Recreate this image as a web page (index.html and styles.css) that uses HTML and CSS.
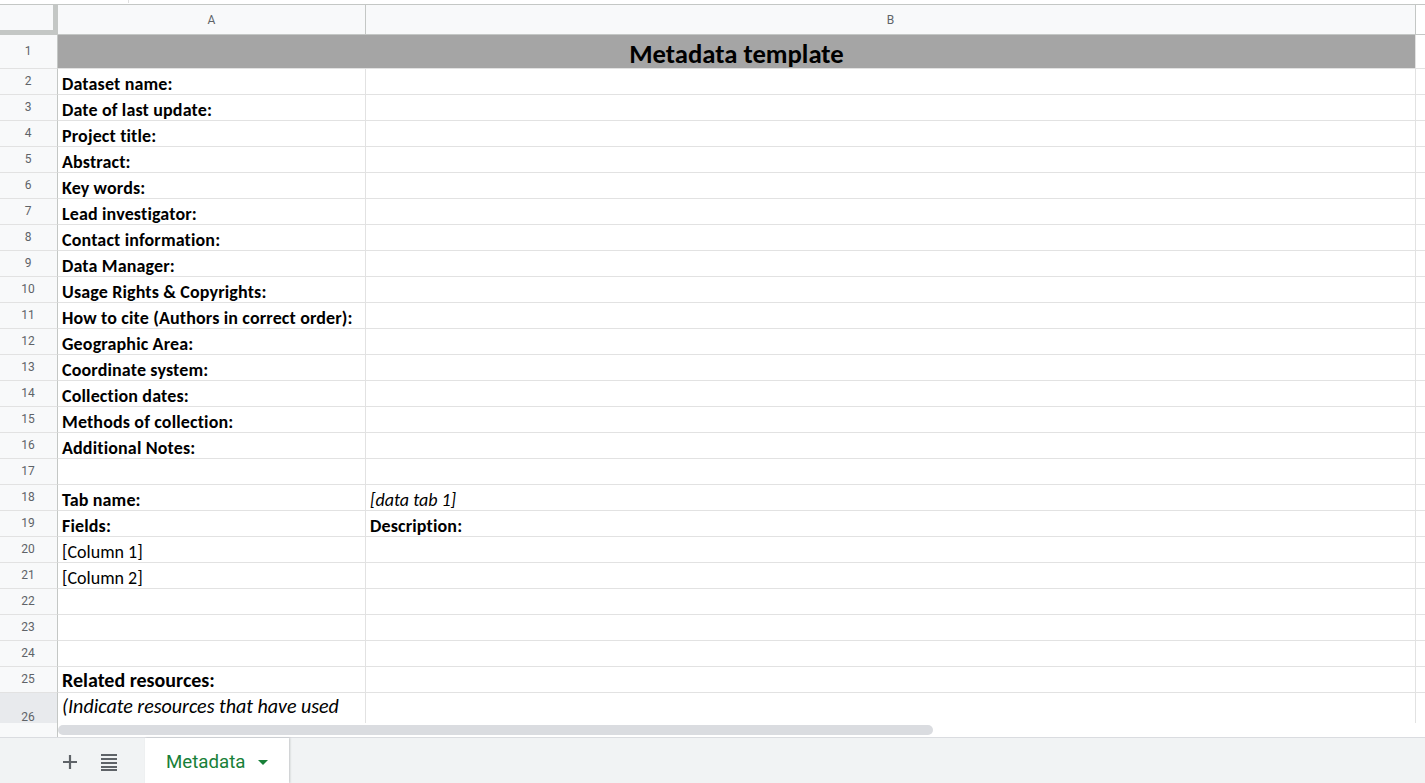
FILE: index.html
```html
<!DOCTYPE html>
<html>
<head>
<meta charset="utf-8">
<link rel="stylesheet" href="styles.css">
</head>
<body>
<div class="app">
  <div class="topstrip"><span class="tick"></span></div>
  <div class="sheet">
    <div class="row colheads">
      <div class="corner"></div>
      <div class="colhead cola">A</div>
      <div class="colhead colb">B</div>
      <div class="rest"></div>
    </div>
    <div class="row r-title">
      <div class="rh">1</div>
      <div class="title">Metadata template</div>
      <div class="rest"></div>
    </div>
    <div class="row"><div class="rh">2</div><div class="c a b">Dataset name:</div><div class="c bcol"></div><div class="rest"></div></div>
    <div class="row"><div class="rh">3</div><div class="c a b">Date of last update:</div><div class="c bcol"></div><div class="rest"></div></div>
    <div class="row"><div class="rh">4</div><div class="c a b">Project title:</div><div class="c bcol"></div><div class="rest"></div></div>
    <div class="row"><div class="rh">5</div><div class="c a b">Abstract:</div><div class="c bcol"></div><div class="rest"></div></div>
    <div class="row"><div class="rh">6</div><div class="c a b">Key words:</div><div class="c bcol"></div><div class="rest"></div></div>
    <div class="row"><div class="rh">7</div><div class="c a b">Lead investigator:</div><div class="c bcol"></div><div class="rest"></div></div>
    <div class="row"><div class="rh">8</div><div class="c a b">Contact information:</div><div class="c bcol"></div><div class="rest"></div></div>
    <div class="row"><div class="rh">9</div><div class="c a b">Data Manager:</div><div class="c bcol"></div><div class="rest"></div></div>
    <div class="row"><div class="rh">10</div><div class="c a b">Usage Rights &amp; Copyrights:</div><div class="c bcol"></div><div class="rest"></div></div>
    <div class="row"><div class="rh">11</div><div class="c a b">How to cite (Authors in correct order):</div><div class="c bcol"></div><div class="rest"></div></div>
    <div class="row"><div class="rh">12</div><div class="c a b">Geographic Area:</div><div class="c bcol"></div><div class="rest"></div></div>
    <div class="row"><div class="rh">13</div><div class="c a b">Coordinate system:</div><div class="c bcol"></div><div class="rest"></div></div>
    <div class="row"><div class="rh">14</div><div class="c a b">Collection dates:</div><div class="c bcol"></div><div class="rest"></div></div>
    <div class="row"><div class="rh">15</div><div class="c a b">Methods of collection:</div><div class="c bcol"></div><div class="rest"></div></div>
    <div class="row"><div class="rh">16</div><div class="c a b">Additional Notes:</div><div class="c bcol"></div><div class="rest"></div></div>
    <div class="row"><div class="rh">17</div><div class="c a"></div><div class="c bcol"></div><div class="rest"></div></div>
    <div class="row"><div class="rh">18</div><div class="c a b">Tab name:</div><div class="c bcol i">[data tab 1]</div><div class="rest"></div></div>
    <div class="row"><div class="rh">19</div><div class="c a b">Fields:</div><div class="c bcol b">Description:</div><div class="rest"></div></div>
    <div class="row"><div class="rh">20</div><div class="c a">[Column 1]</div><div class="c bcol"></div><div class="rest"></div></div>
    <div class="row"><div class="rh">21</div><div class="c a">[Column 2]</div><div class="c bcol"></div><div class="rest"></div></div>
    <div class="row"><div class="rh">22</div><div class="c a"></div><div class="c bcol"></div><div class="rest"></div></div>
    <div class="row"><div class="rh">23</div><div class="c a"></div><div class="c bcol"></div><div class="rest"></div></div>
    <div class="row"><div class="rh">24</div><div class="c a"></div><div class="c bcol"></div><div class="rest"></div></div>
    <div class="row"><div class="rh">25</div><div class="c a b big">Related resources:</div><div class="c bcol"></div><div class="rest"></div></div>
    <div class="row r-last"><div class="rh sel">26</div><div class="c a i big top">(Indicate resources that have used</div><div class="c bcol"></div><div class="rest"></div></div>
    <div class="hscroll">
      <div class="hs-left"></div>
      <div class="hs-track"><div class="thumb"></div></div>
    </div>
  </div>
  <div class="tabbar">
    <button class="iconbtn add" aria-label="Add sheet">
      <svg width="14" height="14" viewBox="0 0 14 14"><path d="M7 0v14M0 7h14" stroke="#5f6368" stroke-width="2.2" fill="none"/></svg>
    </button>
    <button class="iconbtn list" aria-label="All sheets">
      <svg width="16" height="18" viewBox="0 0 16 18"><g fill="#5f6368"><rect x="0" y="1" width="16" height="2"/><rect x="0" y="5" width="16" height="2"/><rect x="0" y="9" width="16" height="2"/><rect x="0" y="13" width="16" height="2"/><rect x="0" y="16" width="16" height="2"/></g></svg>
    </button>
    <div class="tab">
      <span class="tabname">Metadata</span>
      <svg class="caret" width="10" height="5" viewBox="0 0 10 5"><path d="M0 0h10L5 5z" fill="#188038"/></svg>
    </div>
  </div>
</div>
</body>
</html>
```
FILE: styles.css
```css
* { box-sizing: border-box; }
html, body { margin: 0; padding: 0; }
body {
  width: 1425px;
  height: 783px;
  overflow: hidden;
  background: #fff;
  font-family: "Carlito", "Lato", "Liberation Sans", sans-serif;
  color: #000;
}
.app { display: flex; flex-direction: column; height: 783px; }

.topstrip {
  height: 5px;
  border-bottom: 1px solid #c4c7c5;
  background: #fff;
  position: relative;
}
.tick { position: absolute; left: 128px; top: 0; width: 1px; height: 3px; background: #e0e0e0; }

.sheet { display: flex; flex-direction: column; }

.row {
  display: grid;
  grid-template-columns: 58px 308px 1050px 1fr;
  height: 26px;
}
.rest { border-bottom: 1px solid #e2e2e2; }

.colheads { height: 30px; background: #f8f9fa; }
.colheads .rest { background: #fff; border-bottom: 1px solid #c4c7c5; }
.corner {
  background: #f8f9fa;
  border-right: 5px solid #c4c7c5;
  border-bottom: 5px solid #c4c7c5;
}
.colhead {
  display: flex;
  align-items: center;
  justify-content: center;
  font-family: Roboto, "Liberation Sans", Arial, sans-serif;
  font-size: 12px;
  color: #5f6368;
  border-right: 1px solid #c4c7c5;
  border-bottom: 1px solid #c4c7c5;
}

.rh {
  background: #f8f9fa;
  border-right: 1px solid #c4c7c5;
  border-bottom: 1px solid #e2e2e2;
  display: flex;
  align-items: center;
  justify-content: center;
  font-family: Roboto, "Liberation Sans", Arial, sans-serif;
  font-size: 12px;
  color: #5f6368;
  padding-right: 1px;
  padding-bottom: 2px;
}
.rh.sel {
  background: #e8eaed;
  align-items: flex-start;
  padding-top: 17px;
  line-height: 14px;
  padding-bottom: 0;
}

.r-title { height: 34px; grid-template-columns: 58px 1358px 1fr; }
.title {
  background: #a5a5a5;
  border-right: 1px solid #e2e2e2;
  border-bottom: 1px solid #e2e2e2;
  display: flex;
  align-items: flex-end;
  justify-content: center;
  font-weight: 700;
  font-size: 26.7px;
  line-height: 27px;
  padding-bottom: 0;
}
.r-title .rh { border-bottom: 1px solid #e2e2e2; }

.c {
  border-right: 1px solid #e2e2e2;
  border-bottom: 1px solid #e2e2e2;
  display: flex;
  align-items: flex-end;
  padding: 0 4px 0 4px;
  font-size: 18px;
  line-height: 19px;
  white-space: nowrap;
  overflow: hidden;
}
.c.b { font-weight: 700; letter-spacing: 0.15px; }
.c.i { font-style: italic; }
.c.big { font-size: 20px; line-height: 23px; padding-bottom: 0; letter-spacing: 0; }
.c.top { align-items: flex-start; padding-top: 1px; line-height: 25px; }

.r-last { height: 30px; }
.r-last .c, .r-last .rest, .r-last .rh { border-bottom: 1px solid #d0d0d0; }

.hscroll {
  display: grid;
  grid-template-columns: 58px 1fr;
  height: 15px;
  border-bottom: 1px solid #dadce0;
}
.hs-left { background: #f8f9fa; border-right: 1px solid #c4c7c5; }
.hs-track { background: #fff; padding: 2px 0 2px 0; }
.thumb {
  width: 875px;
  height: 10px;
  background: #dadce0;
  border-radius: 5px;
}

.tabbar {
  flex: 1;
  background: #f1f3f4;
  display: flex;
  align-items: stretch;
  padding-left: 58px;
}
.iconbtn {
  border: 0;
  background: transparent;
  padding: 0;
  display: flex;
  align-items: center;
  justify-content: center;
  cursor: pointer;
}
.iconbtn.add { width: 24px; padding-top: 2px; }
.iconbtn.list { width: 24px; margin-left: 15px; padding-top: 2px; }
.tab {
  margin-left: 24px;
  width: 144px;
  background: #fff;
  display: flex;
  align-items: center;
  padding-left: 21px;
  padding-top: 3px;
  gap: 12px;
  box-shadow: 1px 0 2px rgba(60,64,67,0.25);
}
.tabname {
  font-family: Roboto, "Liberation Sans", Arial, sans-serif;
  font-size: 18.7px;
  color: #188038;
  font-weight: 400;
}
.caret { margin-top: 1px; }
```
